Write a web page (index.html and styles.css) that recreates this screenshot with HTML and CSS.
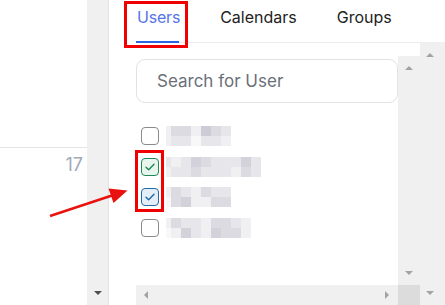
FILE: index.html
```html
<!DOCTYPE html>
<html>
<head>
<meta charset="utf-8">
<link rel="stylesheet" href="styles.css">
</head>
<body>
<div class="page">
  <div class="left-pane">
    <div class="day-top"></div>
    <div class="day-row"><span class="day-num">17</span></div>
  </div>
  <div class="left-scroll"><span class="tri tri-down dark"></span></div>
  <div class="right-pane">
    <div class="main-col">
      <div class="tabs">
        <div class="tab active">Users</div>
        <div class="tab">Calendars</div>
        <div class="tab">Groups</div>
      </div>
      <div class="body">
        <div class="scrollbox">
          <div class="content">
            <div class="search">Search for User</div>
            <ul class="users">
              <li class="user">
                <span class="cb"></span>
                <div class="mosaic">
                  <div class="mrow"><i class="h s1"></i><i class="s3"></i><i class="s3"></i><i class="s1"></i><i class="s5"></i><i class="s3"></i><i class="s2"></i></div>
                  <div class="mrow"><i class="h s1"></i><i class="s2"></i><i class="s2"></i><i class="s0"></i><i class="s2"></i><i class="s2"></i><i class="s1"></i></div>
                </div>
              </li>
              <li class="user">
                <span class="cb green"><svg viewBox="0 0 18 18"><path d="M4.5 9.2l3 3 6-6.2"/></svg></span>
                <div class="mosaic">
                  <div class="mrow"><i class="h s2"></i><i class="s1"></i><i class="s2"></i><i class="s4"></i><i class="s3"></i><i class="s2"></i><i class="s2"></i><i class="s2"></i><i class="s4"></i><i class="s2"></i></div>
                  <div class="mrow"><i class="h s1"></i><i class="s2"></i><i class="s2"></i><i class="s3"></i><i class="s2"></i><i class="s2"></i><i class="s2"></i><i class="s1"></i><i class="s3"></i><i class="s2"></i></div>
                </div>
              </li>
              <li class="user">
                <span class="cb blue"><svg viewBox="0 0 18 18"><path d="M4.5 9.2l3 3 6-6.2"/></svg></span>
                <div class="mosaic">
                  <div class="mrow"><i class="h s1"></i><i class="s3"></i><i class="s2"></i><i class="s1"></i><i class="s3"></i><i class="s2"></i><i class="s2"></i></div>
                  <div class="mrow"><i class="h s0"></i><i class="s3"></i><i class="s4"></i><i class="s1"></i><i class="s1"></i><i class="s3"></i><i class="s3"></i></div>
                </div>
              </li>
              <li class="user">
                <span class="cb"></span>
                <div class="mosaic">
                  <div class="mrow"><i class="h s1"></i><i class="s3"></i><i class="s2"></i><i class="s2"></i><i class="s1"></i><i class="s3"></i><i class="s3"></i><i class="s2"></i><i class="s1"></i></div>
                  <div class="mrow"><i class="h s0"></i><i class="s1"></i><i class="s4"></i><i class="s2"></i><i class="s1"></i><i class="s4"></i><i class="s3"></i><i class="s3"></i><i class="s1"></i></div>
                </div>
              </li>
            </ul>
          </div>
          <div class="vbar"><span class="tri tri-up"></span><span class="tri tri-down"></span></div>
          <div class="hbar"><span class="tri tri-left"></span><span class="tri tri-right"></span></div>
          <div class="corner"></div>
        </div>
      </div>
    </div>
    <div class="outer-bar"><span class="tri tri-up"></span><span class="tri tri-down"></span></div>
  </div>
</div>
<div class="mark mark-tab"></div>
<div class="mark mark-checks"></div>
<svg class="arrow" width="445" height="305" viewBox="0 0 445 305">
  <line x1="50" y1="216" x2="112" y2="195.5" stroke="#e8120f" stroke-width="2.5"/>
  <polygon points="127.5,190.5 108.5,188.5 113.5,203" fill="#e8120f"/>
</svg>
</body>
</html>
```

FILE: styles.css
```css
* { box-sizing: border-box; }
html, body { margin: 0; padding: 0; }
body {
  width: 445px;
  height: 305px;
  overflow: hidden;
  background: #fff;
  font-family: Inter, "Noto Sans", sans-serif;
  position: relative;
}
.page {
  display: flex;
  height: 305px;
}
.left-pane {
  width: 87px;
  display: flex;
  flex-direction: column;
  background: #fff;
}
.day-top {
  height: 148px;
  border-bottom: 1px solid #e4e4e4;
}
.day-row {
  display: flex;
  justify-content: flex-end;
  padding: 6px 4px 0 0;
}
.day-num {
  font-size: 18px;
  color: #a3a9b8;
  line-height: 22px;
}
.left-scroll {
  width: 22px;
  background: #f0f0f0;
  display: flex;
  align-items: flex-end;
  justify-content: center;
  padding-bottom: 10px;
  border-right: 1px solid #e2e2e2;
}
.right-pane {
  flex: 1;
  display: flex;
}
.main-col {
  width: 311px;
  display: flex;
  flex-direction: column;
}
.tabs {
  margin-left: 27px;
  height: 43px;
  border-bottom: 1px solid #ececec;
  display: flex;
  gap: 39px;
  padding-top: 7px;
}
.tab {
  position: relative;
  font-size: 16px;
  line-height: 21px;
  color: #222;
  height: 35px;
  padding-left: 1px;
}
.tab.active { color: #5574e9; letter-spacing: -0.2px; }
.tab.active::after {
  content: "";
  position: absolute;
  left: 0;
  right: 1px;
  bottom: -1px;
  height: 2px;
  background: #2d63e2;
}
.body {
  flex: 1;
  padding: 13px 0 0 27px;
  display: flex;
}
.scrollbox {
  flex: 1;
  display: grid;
  grid-template-columns: 262px 22px;
  grid-template-rows: 229px 20px;
}
.content {
  padding-top: 3px;
  overflow: hidden;
}
.search {
  height: 44px;
  border: 1px solid #e2e2e6;
  border-radius: 9px;
  padding-left: 20px;
  display: flex;
  align-items: center;
  font-size: 17px;
  color: #6b6f7a;
}
.users {
  list-style: none;
  margin: 17.7px 0 0;
  padding: 0 0 0 5px;
}
.user {
  height: 30.67px;
  display: flex;
  align-items: center;
  gap: 7px;
}
.cb {
  width: 18px;
  height: 18px;
  border: 1.5px solid #8a8a8a;
  border-radius: 4px;
  display: flex;
  align-items: center;
  justify-content: center;
  flex: none;
}
.cb svg {
  width: 16px;
  height: 16px;
  fill: none;
  stroke-width: 1.6;
  stroke-linecap: round;
  stroke-linejoin: round;
}
.cb.green { border-color: #1e8a55; background: #e8f5ee; }
.cb.green svg { stroke: #1e8a55; }
.cb.blue { border-color: #1f6aa8; background: #e4eef8; }
.cb.blue svg { stroke: #1f6aa8; }
.mosaic {
  display: flex;
  flex-direction: column;
}
.mrow { display: flex; }
.mrow i {
  display: block;
  width: 10px;
  height: 10px;
}
.mrow i.h { width: 5px; }
.s0 { background: #f8f8f9; }
.s1 { background: #f0eff2; }
.s2 { background: #e7e6eb; }
.s3 { background: #dddbe2; }
.s4 { background: #d3d1d9; }
.s5 { background: #cdcbd5; }
.vbar {
  background: #f0f0f0;
  display: flex;
  flex-direction: column;
  align-items: center;
  justify-content: space-between;
  padding: 10px 0 10px;
}
.hbar {
  background: #f0f0f0;
  display: flex;
  align-items: center;
  justify-content: space-between;
  padding: 0 9px 0 8px;
}
.corner { background: #dcdcdc; }
.outer-bar {
  width: 25px;
  margin-top: 42px;
  background: #f0f0f0;
  display: flex;
  flex-direction: column;
  align-items: flex-start;
  justify-content: space-between;
  padding: 11px 0 10px 6px;
}
.tri {
  display: block;
  width: 0;
  height: 0;
}
.tri-up {
  border-left: 4px solid transparent;
  border-right: 4px solid transparent;
  border-bottom: 4px solid #a3a3a3;
}
.tri-down {
  border-left: 4px solid transparent;
  border-right: 4px solid transparent;
  border-top: 4px solid #a3a3a3;
}
.tri-down.dark { border-top-color: #505050; }
.tri-left {
  border-top: 4px solid transparent;
  border-bottom: 4px solid transparent;
  border-right: 4px solid #a3a3a3;
}
.tri-right {
  border-top: 4px solid transparent;
  border-bottom: 4px solid transparent;
  border-left: 4px solid #a3a3a3;
}
.mark {
  position: absolute;
  border: 3px solid #f00000;
}
.mark-tab {
  left: 124px;
  top: 1px;
  width: 64px;
  height: 47px;
}
.mark-checks {
  left: 135px;
  top: 150px;
  width: 29px;
  height: 62px;
}
.arrow {
  position: absolute;
  left: 0;
  top: 0;
}
```
